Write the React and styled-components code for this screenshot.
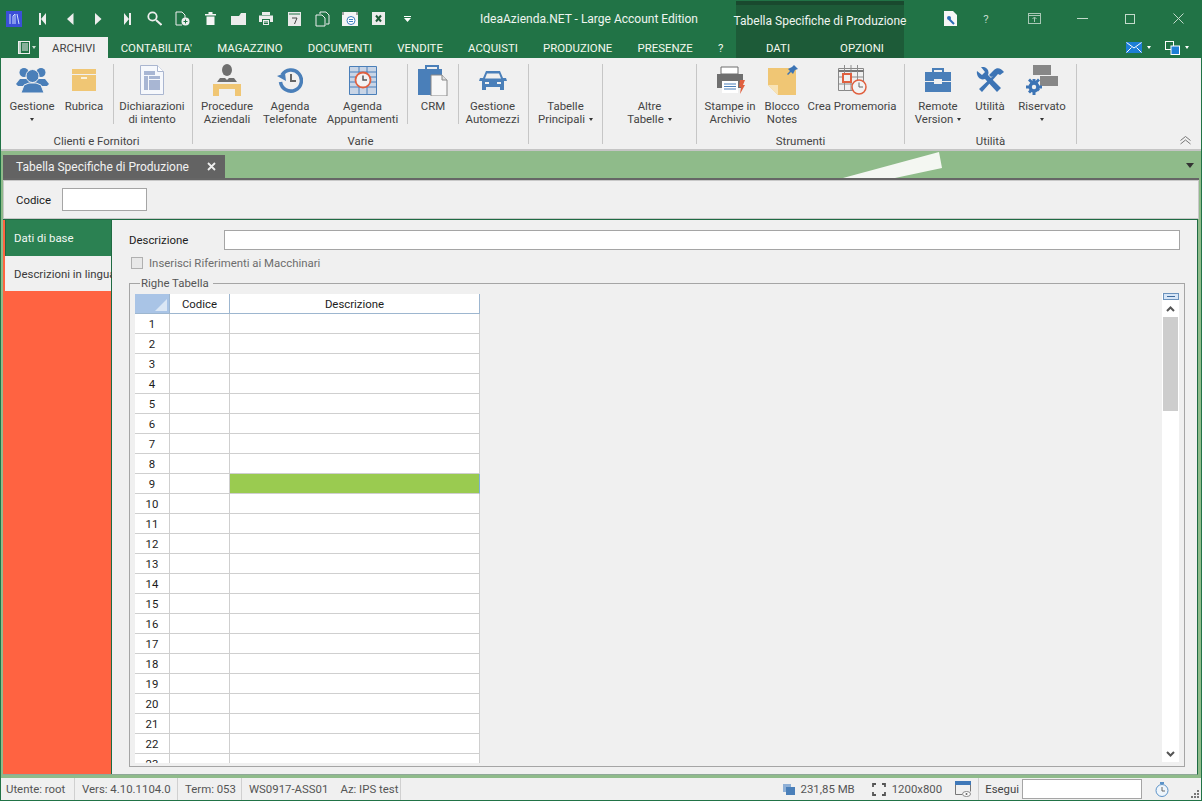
import React from 'react';
import styled, { createGlobalStyle } from 'styled-components';

const GlobalStyle = createGlobalStyle`
  html, body {
    margin: 0;
    padding: 0;
    background: #8fbb8a;
  }
  * { box-sizing: border-box; }
`;

const GREEN = '#217346';
const BLUE = '#4a7fb9';
const TAN = '#f0c674';
const GREY = '#6f6f6f';
const RED = '#e0603f';

const Window = styled.div`
  width: 1202px;
  height: 801px;
  overflow: hidden;
  display: flex;
  flex-direction: column;
  background: #8fbb8a;
  font-family: Roboto, "Liberation Sans", sans-serif;
  font-size: 11.4px;
  color: #444;
  border-left: 1px solid ${GREEN};
  border-right: 1px solid ${GREEN};
`;

/* title bar */
const TitleBar = styled.div`
  height: 58px;
  margin: 0 -1px;
  background: ${GREEN};
  display: flex;
  color: #fff;
  flex-shrink: 0;
`;

const TitleLeft = styled.div`
  width: 736px;
  display: flex;
  flex-direction: column;
`;

const QatRow = styled.div`
  height: 37px;
  display: flex;
  align-items: center;
  padding: 0 0 0 6px;
  position: relative;
`;

const QatButton = styled.span`
  width: ${(p) => p.$w || 28}px;
  height: 20px;
  display: flex;
  align-items: center;
  justify-content: ${(p) => (p.$start ? 'flex-start' : 'center')};
  flex-shrink: 0;
`;

const AppTitle = styled.div`
  margin-left: auto;
  padding-right: 38px;
  font-size: 12px;
  color: #eef5f0;
  white-space: nowrap;
`;

const TabRow = styled.div`
  height: 21px;
  display: flex;
  padding-left: 12px;
`;

const AppMenu = styled.div`
  width: 45px;
  display: flex;
  align-items: center;
  gap: 2px;
  padding-left: 6px;
`;

const Tab = styled.div`
  padding: 0 12.6px;
  display: flex;
  align-items: center;
  justify-content: center;
  font-size: 11.4px;
  white-space: nowrap;
  color: ${(p) => (p.$active ? '#444' : '#f4f8ee')};
  background: ${(p) => (p.$active ? '#f0f0f0' : 'transparent')};
`;

const ContextGroup = styled.div`
  width: 168px;
  background: #1d5b38;
  border-top: 4px solid #19492e;
  margin-top: 1px;
  display: flex;
  flex-direction: column;
`;

const ContextTitle = styled.div`
  height: 32px;
  display: flex;
  align-items: center;
  justify-content: center;
  font-size: 12px;
  color: #eef5f0;
  white-space: nowrap;
`;

const ContextTabs = styled.div`
  height: 21px;
  display: flex;
`;

const ContextTab = styled.div`
  flex: 1;
  display: flex;
  align-items: center;
  justify-content: center;
  font-size: 11.4px;
  color: #f4f8ee;
`;

const TitleRight = styled.div`
  flex: 1;
  display: flex;
  flex-direction: column;
`;

const WinControls = styled.div`
  height: 37px;
  display: flex;
  align-items: center;
  padding-left: 23px;
`;

const WinButton = styled.span`
  width: ${(p) => p.$w}px;
  display: flex;
  justify-content: center;
  align-items: center;
  color: #c3dacb;
`;

const Extras = styled.div`
  height: 21px;
  display: flex;
  justify-content: flex-end;
  align-items: center;
  gap: 14px;
  padding-right: 13px;
`;

const ExtraButton = styled.span`
  display: flex;
  align-items: center;
  gap: 5px;
`;

/* ribbon */
const Ribbon = styled.div`
  height: 93px;
  background: #f0f0f0;
  border-bottom: 2px solid #c5c5c5;
  display: flex;
  padding-top: 6px;
  position: relative;
  flex-shrink: 0;
`;

const RibbonGroup = styled.div`
  width: ${(p) => p.$w}px;
  height: 80px;
  border-right: 1px solid #c6c6c6;
  display: flex;
  flex-direction: column;
  flex-shrink: 0;
`;

const GroupItems = styled.div`
  height: 69px;
  flex-shrink: 0;
  display: flex;
`;

const GroupLabel = styled.div`
  height: 11px;
  line-height: 16px;
  text-align: center;
  white-space: nowrap;
`;

const RibbonItem = styled.div`
  width: ${(p) => p.$w}px;
  height: 60px;
  flex-shrink: 0;
  display: flex;
  flex-direction: column;
  align-items: center;
  padding-right: ${(p) => p.$pr || 0}px;
  border-right: ${(p) => (p.$sep ? '1px solid #c6c6c6' : 'none')};
`;

const ItemIcon = styled.div`
  height: 32px;
  flex-shrink: 0;
  display: flex;
  align-items: center;
  justify-content: center;
  margin-bottom: 4px;
`;

const ItemText = styled.div`
  text-align: center;
  line-height: 13px;
  white-space: nowrap;
  flex-shrink: 0;
`;

const Caret = styled.span`
  display: inline-block;
  width: 0;
  height: 0;
  margin-left: ${(p) => (p.$block ? 0 : 4)}px;
  vertical-align: middle;
  border-left: 2.5px solid transparent;
  border-right: 2.5px solid transparent;
  border-top: 3px solid ${(p) => p.$color || '#333'};
`;

const CaretLine = styled.div`
  height: 13px;
  flex-shrink: 0;
  display: flex;
  align-items: center;
  justify-content: center;
`;

const CollapseButton = styled.span`
  position: absolute;
  right: 10px;
  bottom: 4px;
  display: flex;
`;

/* document tabs band */
const DocBand = styled.div`
  height: 27px;
  position: relative;
  display: flex;
  align-items: flex-end;
  padding-left: 2px;
  flex-shrink: 0;
`;

const DocTab = styled.div`
  width: 222px;
  height: 23px;
  background: #636363;
  color: #f2f2f2;
  font-size: 12px;
  display: flex;
  align-items: center;
  justify-content: space-between;
  padding: 0 9px 0 13px;
`;

const Streak = styled.svg`
  position: absolute;
  left: 830px;
  top: 0;
`;

const BandArrow = styled.span`
  position: absolute;
  right: 7px;
  top: 12px;
  display: flex;
`;

/* form */
const FormFrame = styled.div`
  flex: 1;
  min-height: 0;
  margin: 0 2px 3px 2px;
  border-top: 2px solid #666;
  display: flex;
  flex-direction: column;
`;

const CodeStrip = styled.div`
  height: 39px;
  background: #f0f0f0;
  border: 1px solid #c8c8c8;
  display: flex;
  align-items: center;
  padding-left: 12px;
  flex-shrink: 0;
`;

const FieldLabel = styled.label`
  color: #1c1c1c;
  white-space: nowrap;
`;

const CodeLabel = styled(FieldLabel)`
  width: 46px;
`;

const TextBox = styled.div`
  width: ${(p) => (p.$w ? `${p.$w}px` : 'auto')};
  flex: ${(p) => (p.$w ? 'none' : 1)};
  height: 23px;
  background: #fff;
  border: 1px solid #a5a5a5;
`;

const Body = styled.div`
  flex: 1;
  min-height: 0;
  display: flex;
  margin-right: 1px;
  border-top: 1px solid #1f6b43;
  border-right: 1px solid #1f6b43;
  border-bottom: 1px solid #8fa898;
`;

const SideBar = styled.div`
  width: 109px;
  background: #ff6341;
  border-right: 1px solid #1f6b43;
  padding-left: 2px;
  flex-shrink: 0;
  display: flex;
  flex-direction: column;
`;

const SideTab = styled.div`
  height: ${(p) => (p.$active ? 36 : 35)}px;
  display: flex;
  align-items: center;
  white-space: nowrap;
  background: ${(p) => (p.$active ? '#2b8152' : '#f0f0f0')};
  color: ${(p) => (p.$active ? '#f2f7f3' : '#3a3a3a')};
  border-left: ${(p) => (p.$active ? '1px solid #1f6b43' : '0')};
  padding-left: ${(p) => (p.$active ? 8 : 9)}px;
`;

const Content = styled.div`
  flex: 1;
  min-width: 0;
  background: #f0f0f0;
  padding: 10px 12px 7px 17px;
  display: flex;
  flex-direction: column;
`;

const DescRow = styled.div`
  display: flex;
  align-items: center;
  height: 20px;
  margin-right: 5px;
`;

const DescLabel = styled(FieldLabel)`
  width: 95px;
`;

const DescBox = styled(TextBox)`
  height: 20px;
`;

const CheckRow = styled.div`
  height: 14px;
  margin-top: 6px;
  padding-left: 2px;
  display: flex;
  align-items: center;
  gap: 6px;
  color: #6d6d6d;
`;

const CheckBox = styled.span`
  width: 12px;
  height: 12px;
  border: 1px solid #b0b0b0;
  background: #e8e8e8;
`;

const GroupBox = styled.fieldset`
  flex: 1;
  min-height: 0;
  margin: 7px 0 0 0;
  padding: 0 5px 4px 5px;
  border: 1px solid #a5a5a5;
  position: relative;
  display: flex;
`;

const GroupLegend = styled.legend`
  margin-left: 5px;
  padding: 0 4px 0 1px;
  color: #555;
  line-height: 12px;
`;

const GridClip = styled.div`
  width: 345px;
  height: 469px;
  overflow: hidden;
  margin-top: 5px;
`;

const Grid = styled.table`
  width: 345px;
  border-collapse: separate;
  border-spacing: 0;
  table-layout: fixed;
  background: #fff;
`;

const HeadCell = styled.th`
  height: 20px;
  padding: 0;
  width: ${(p) => p.$w}px;
  font-weight: 400;
  color: #1c1c1c;
  background: #fff;
  border-right: 1px solid #9db6cf;
  border-bottom: 1px solid #9db6cf;
`;

const CornerCell = styled(HeadCell)`
  background: #a9c4e6;
  position: relative;
`;

const CornerMark = styled.svg`
  position: absolute;
  right: 2px;
  bottom: 2px;
`;

const RowNum = styled.td`
  height: 20px;
  padding: 0;
  text-align: center;
  color: #1c1c1c;
  background: #fff;
  border-right: 1px solid #cfcfcf;
  border-bottom: 1px solid #cfcfcf;
`;

const Cell = styled.td`
  height: 20px;
  padding: 0;
  background: ${(p) => (p.$selected ? '#9acb50' : '#fff')};
  border-right: 1px solid ${(p) => (p.$selected ? '#7fb0d8' : '#cfcfcf')};
  border-bottom: 1px solid #cfcfcf;
`;

const ScrollColumn = styled.div`
  position: absolute;
  right: 5px;
  top: 4px;
  bottom: 4px;
  width: 17px;
  background: #fff;
  display: flex;
  flex-direction: column;
  align-items: center;
`;

const ScrollTop = styled.div`
  width: 16px;
  height: 7px;
  background: #d7e6f7;
  border: 1px solid #6c93bd;
  display: flex;
  align-items: center;
  justify-content: center;
  flex-shrink: 0;
`;

const ScrollDash = styled.span`
  width: 8px;
  height: 1px;
  background: #3e6a9c;
`;

const ScrollArrow = styled.div`
  height: 17px;
  display: flex;
  align-items: center;
  justify-content: center;
  flex-shrink: 0;
`;

const ScrollThumb = styled.div`
  width: 15px;
  height: 94px;
  background: #cdcdcd;
  flex-shrink: 0;
`;

const ScrollGap = styled.div`
  flex: 1;
`;

/* status bar */
const StatusBar = styled.div`
  height: 23px;
  margin: 0 -1px;
  background: #f0f0f0;
  border-bottom: 1px solid ${GREEN};
  border-left: 1px solid ${GREEN};
  border-right: 1px solid ${GREEN};
  display: flex;
  align-items: center;
  flex-shrink: 0;
  position: relative;
`;

const StatusCell = styled.div`
  height: 100%;
  width: ${(p) => p.$w}px;
  display: flex;
  align-items: center;
  padding-left: ${(p) => p.$pl || 7}px;
  gap: 12px;
  border-right: 1px solid #d0d0d0;
  white-space: nowrap;
  color: #555;
`;

const StatusRight = styled.div`
  margin-left: auto;
  height: 100%;
  display: flex;
  align-items: center;
  padding-right: 32px;
`;

const StatusItem = styled.div`
  display: flex;
  align-items: center;
  gap: 6px;
  margin-right: ${(p) => p.$mr || 0}px;
  white-space: nowrap;
  color: #555;
`;

const RunLabel = styled.span`
  margin: 0 3px 0 7px;
  color: #444;
  border-left: 1px solid #d0d0d0;
  padding-left: 6px;
  height: 100%;
  display: flex;
  align-items: center;
`;

const RunBox = styled.div`
  width: 120px;
  height: 20px;
  background: #fff;
  border: 1px solid #a5a5a5;
  margin-right: 13px;
`;

const Grip = styled.svg`
  position: absolute;
  right: 2px;
  bottom: 2px;
`;

/* drawings */
const Svg = ({ w, h = w, children, ...rest }) => (
  <svg width={w} height={h} viewBox={`0 0 ${w} ${h}`} {...rest}>{children}</svg>
);

const QLogo = () => (
  <Svg w={16} h={16}>
    <rect width="16" height="16" fill="#3b4fd8" />
    <path d="M4 3v10M7 13V5l2-2v10M11 3l2 10" stroke="#cfe0ff" fill="none" />
  </Svg>
);
const First = () => <Svg w={7} h={12}><path d="M0 0h2v12H0zM7 0v12L2 6z" fill="#eee" /></Svg>;
const Prev = () => <Svg w={7} h={12}><path d="M6.500 0v12L0 6z" fill="#eee" /></Svg>;
const Next = () => <Svg w={7} h={12}><path d="M0 0v12l6.500-6z" fill="#eee" /></Svg>;
const Last = () => <Svg w={7} h={12}><path d="M5 0h2v12H5zM0 0v12l5-6z" fill="#eee" /></Svg>;
const Search = () => (
  <Svg w={15} h={15}>
    <circle cx="5.500" cy="5.500" r="4.200" fill="none" stroke="#eee" strokeWidth="1.800" />
    <path d="M9 9l5.500 5" stroke="#eee" strokeWidth="2" />
  </Svg>
);
const NewDoc = () => (
  <Svg w={15} h={15}>
    <path d="M1 1h6l3 3v4M7 14H1V1" fill="none" stroke="#eee" />
    <circle cx="10.500" cy="10.500" r="4" fill="#eee" />
    <path d="M8.500 10.500h4M10.500 8.500v4" stroke={GREEN} />
  </Svg>
);
const Trash = () => (
  <Svg w={11} h={13}>
    <path d="M0 2h11v1.500H0zM3.500 0h4v2h-4zM1.500 4.500h8V13h-8z" fill="#f5f5f5" />
  </Svg>
);
const Folder = () => (
  <Svg w={15} h={12}><path d="M0 3h8l2-3h5v12H0z" fill="#ececec" /></Svg>
);
const Printer = () => (
  <Svg w={14} h={13}>
    <path d="M3 0h8v3H3zM0 3.500h14V10h-3V7H3v3H0zM4 8h6v5H4z" fill="#ececec" />
    <path d="M5 10h4M5 11.500h4" stroke={GREEN} />
  </Svg>
);
const Calc = () => (
  <Svg w={13} h={14}>
    <path d="M0 0h13v14H0z" fill="#e9e9e9" />
    <path d="M1 2h11" stroke={GREEN} />
    <path d="M4 6h5l-2.500 6" fill="none" stroke="#444" />
  </Svg>
);
const Copy = () => (
  <Svg w={15} h={16}>
    <path d="M5 3V1h6l3 3v9h-3M1 4h6l3 3v8H1z" fill="none" stroke="#eee" />
  </Svg>
);
const Preview = () => (
  <Svg w={16} h={14}>
    <rect width="16" height="14" fill="#f4f4f4" />
    <path d="M1 0v3M15 0v3" stroke="#555" />
    <circle cx="9" cy="8.500" r="4" fill="#fff" stroke="#3c7fc0" />
    <path d="M7 7.500h4M7 9.500h4" stroke="#3c7fc0" />
  </Svg>
);
const ExcelX = () => (
  <Svg w={13} h={13}>
    <rect width="13" height="13" fill="#ececec" />
    <path d="M4 3.500l5 6M9 3.500l-5 6" stroke="#1d5b38" strokeWidth="2" />
  </Svg>
);
const QatMore = () => (
  <Svg w={7} h={6}><path d="M0 0h7v1H0zM0 2h7L3.500 6z" fill="#fff" /></Svg>
);
const MenuIcon = () => (
  <Svg w={12} h={13}>
    <rect x=".5" y=".5" width="11" height="12" fill="none" stroke="#eee" />
    <path d="M2 .5v12" stroke="#eee" strokeWidth="1.500" />
    <path d="M4 3h6M4 5h6M4 7h6M4 9h6" stroke="#eee" />
  </Svg>
);
const HelpDoc = () => (
  <Svg w={13} h={15}>
    <path d="M0 0h9l4 4v11H0z" fill="#f6f6f6" />
    <path d="M5 8l5 5" stroke="#2a6cb5" strokeWidth="2" />
    <circle cx="5" cy="7" r="2" fill="#2a6cb5" />
  </Svg>
);
const Restore = () => (
  <Svg w={13} h={11}>
    <rect x=".5" y=".5" width="12" height="10" fill="none" stroke="#a9c8b6" />
    <path d="M1 2.500h11M6.500 9V4.500M4.500 6l2-2 2 2" fill="none" stroke="#a9c8b6" />
  </Svg>
);
const MinIcon = () => <Svg w={11} h={3}><path d="M0 1.500h11" stroke="#c3dacb" /></Svg>;
const MaxIcon = () => <Svg w={10} h={10}><rect x=".5" y=".5" width="9" height="9" fill="none" stroke="#c3dacb" /></Svg>;
const CloseIcon = () => <Svg w={11} h={11}><path d="M.5.500l10 10M10.500.500l-10 10" stroke="#c3dacb" /></Svg>;
const Envelope = () => (
  <Svg w={16} h={11}>
    <rect width="16" height="11" fill="#1e7fd6" />
    <path d="M.5.500L8 6l7.500-5.500M.5 10.500l5-5M15.500 10.500l-5-5" fill="none" stroke="#fff" />
  </Svg>
);
const Windows = () => (
  <Svg w={15} h={14}>
    <rect x=".5" y=".5" width="8" height="8" fill={GREEN} stroke="#fff" />
    <rect x="6" y="5" width="8.500" height="8.500" fill="#1e7fd6" stroke="#fff" />
  </Svg>
);

const People = () => (
  <Svg w={33} h={28}>
    <g fill={BLUE}>
      <circle cx="8" cy="6.500" r="4.500" />
      <circle cx="25" cy="6.500" r="4.500" />
      <path d="M0 18l4-5h8l4 5-6 2H2zM33 18l-4-5h-8l-4 5 6 2h8z" />
    </g>
    <circle cx="16.500" cy="10" r="6.500" fill={BLUE} stroke="#f0f0f0" />
    <path d="M5 27l3-8 5-2h7l5 2 3 8z" fill={BLUE} stroke="#f0f0f0" />
  </Svg>
);
const Box = () => (
  <Svg w={24} h={22}>
    <path d="M0 0h24v5H0zM0 6h24v16H0z" fill={TAN} />
    <path d="M9 8h6v2H9z" fill="#fbf1d9" />
  </Svg>
);
const Sheet = () => (
  <Svg w={24} h={30}>
    <path d="M.5.500h17l6 6v23H.5z" fill="#f6f8fc" stroke="#aab6d0" />
    <path d="M17.500.500v6h6" fill="#fff" stroke="#aab6d0" />
    <path d="M4 6h11v4H4zM4 11h4v14H4zM9 11h11v3H9zM9 15h11v10H9z" fill="#a8b6d3" />
  </Svg>
);
const Desk = () => (
  <Svg w={28} h={32}>
    <ellipse cx="14" cy="6" rx="5" ry="6" fill={GREY} />
    <path d="M4 18l3-4h5l2 2 2-2h5l3 4z" fill={GREY} />
    <path d="M0 20h28v12H22v-7H6v7H0z" fill={TAN} />
  </Svg>
);
const History = () => (
  <Svg w={26} h={26}>
    <path d="M5 8a10.500 10.500 0 1 1-1.500 7" fill="none" stroke={BLUE} strokeWidth="3.500" />
    <path d="M0 9l8-3 1 8z" fill={BLUE} />
    <path d="M14 7v7h5" fill="none" stroke="#666" strokeWidth="2" />
  </Svg>
);
const Planner = () => (
  <Svg w={28} h={29}>
    <path d="M.5.500h27v28H.5z" fill="#c9d5e6" stroke={BLUE} />
    <path d="M10 1v28M18 1v28M1 6h27M1 11h27M1 16h27M1 21h27" stroke={BLUE} />
    <circle cx="14" cy="14" r="7.500" fill="#f3f3f3" stroke={RED} strokeWidth="1.800" />
    <path d="M14 9.500V14h4" fill="none" stroke="#555" strokeWidth="1.500" />
  </Svg>
);
const CrmIcon = () => (
  <Svg w={30} h={31}>
    <path d="M8 4V1h12v3" fill="none" stroke={BLUE} strokeWidth="2" />
    <path d="M0 4h24v26H0z" fill={BLUE} />
    <path d="M13 10h11l5 5v16H13z" fill="#f7f7f7" stroke="#888" />
    <path d="M24 10v5h5" fill="#ddd" stroke="#888" />
  </Svg>
);
const Car = () => (
  <Svg w={28} h={21}>
    <path d="M7 1h14l3 7h3l1 3h-3v9h-4v-3H7v3H3v-9H0l1-3h3z" fill={BLUE} />
    <path d="M8 3.500h12l2 5H6z" fill="#f0f0f0" />
    <path d="M6 12h4v2H6zM18 12h4v2h-4z" fill="#f0f0f0" />
  </Svg>
);
const PrintArchive = () => (
  <Svg w={29} h={28}>
    <path d="M5 1h17v7H5z" fill="#fff" stroke="#6f6f6f" />
    <path d="M1 8h26v14H1z" fill={GREY} />
    <path d="M6 15h16v12H6z" fill="#fff" />
    <path d="M8 18h12M8 20.500h12M8 23h12" stroke={BLUE} />
    <path d="M24 14h5l-2 5h2l-5 9 1-7h-2z" fill={RED} />
  </Svg>
);
const Sticky = () => (
  <Svg w={31} h={31}>
    <path d="M1 3h28v27H11L1 20z" fill={TAN} />
    <path d="M1 20h10v10z" fill="#f8e3b6" />
    <path d="M27 0l4 4-3 1-2 4-2-2-3 3-1-1 3-3-2-2 4-2z" fill="#3c74b5" />
  </Svg>
);
const Reminder = () => (
  <Svg w={29} h={30}>
    <path d="M.5 3.500h25v22H.5z" fill="none" stroke="#888" />
    <path d="M.5 6h25" stroke="#777" strokeWidth="2" />
    <path d="M6.500 0v5M13 0v5M19.500 0v5M6.500 6v20M13 6v20M19.500 6v20M1 12h24M1 19h24" stroke="#8e8e8e" />
    <rect x="5" y="9" width="8" height="8" fill="#f0f0f0" stroke={RED} strokeWidth="2" />
    <circle cx="21" cy="22" r="7" fill="#f3f3f3" stroke={RED} strokeWidth="1.500" />
    <path d="M21 17.500V22h4" fill="none" stroke="#666" />
  </Svg>
);
const Briefcase = () => (
  <Svg w={26} h={24}>
    <path d="M8 4V1h10v3" fill="none" stroke={BLUE} strokeWidth="2" />
    <path d="M0 4h26v9h-9v-2H9v2H0zM0 14h9v2h8v-2h9v10H0z" fill={BLUE} />
  </Svg>
);
const Tools = () => (
  <Svg w={29} h={26}>
    <path d="M1 4l5 4 3-3-4-5c5-1 9 3 7 8l13 13-4 4L9 12C4 14 0 9 1 4z" fill="#3c74b5" />
    <path d="M13 8l5-5c3-3 7-2 10 2l-4 3-2-1L6 25l-3-3L17 9l-2 1z" fill="#3c74b5" />
  </Svg>
);
const Reserved = () => (
  <Svg w={32} h={30}>
    <path d="M7 0h18v10H7zM14 11h18v10H14z" fill="#878787" />
    <g fill="#3c74b5">
      <circle cx="8" cy="22" r="5.500" />
      <path d="M6.500 14h3v3h-3zM6.500 27h3v3h-3zM0 20.500h3v3H0zM13 20.500h3v3h-3zM2 15.500l2-2 3 3-2 2zM12 26.500l2-2-3-3-2 2zM2 26.500l2 2 3-3-2-2zM12 13.500l2 2-3 3-2-2z" />
    </g>
    <circle cx="8" cy="22" r="2.200" fill="#f0f0f0" />
  </Svg>
);
const Collapse = () => (
  <Svg w={11} h={9}>
    <path d="M.5 4.500L5.500.500l5 4M.5 8L5.500 4l5 4" fill="none" stroke="#777" />
  </Svg>
);
const Xmark = () => (
  <Svg w={9} h={9}><path d="M1 1l7 7M8 1L1 8" stroke="#eee" strokeWidth="1.800" /></Svg>
);
const BandCaret = () => (
  <Svg w={8} h={5}><path d="M0 0h8L4 5z" fill="#333" /></Svg>
);
const Chevron = ({ up }) => (
  <Svg w={9} h={6}>
    <path d={up ? 'M1 5l3.500-3.500L8 5' : 'M1 1l3.500 3.500L8 1'} fill="none" stroke="#555" strokeWidth="2" />
  </Svg>
);
const Memory = () => (
  <Svg w={12} h={11}>
    <rect width="8" height="8" fill="#8fb0d6" />
    <rect x="3" y="3" width="9" height="8" fill="#4a7fb9" />
  </Svg>
);
const FullScreen = () => (
  <Svg w={14} h={13}>
    <path d="M1 4V1h3M10 1h3v3M13 9v3h-3M4 12H1V9" fill="none" stroke="#555" strokeWidth="1.800" />
  </Svg>
);
const WinView = () => (
  <Svg w={16} h={16}>
    <path d="M.5 1.500h15v9M7 13.500H.5v-12" fill="none" stroke="#777" />
    <rect width="16" height="4" fill="#3f78b8" />
    <ellipse cx="11.500" cy="13" rx="4" ry="2.500" fill="#fff" stroke="#888" />
    <circle cx="11.500" cy="13" r="1" fill="#666" />
  </Svg>
);
const Timer = () => (
  <Svg w={14} h={17}>
    <circle cx="7" cy="9.500" r="6" fill="#eef5fb" stroke="#5b92c8" />
    <path d="M7 6v4h3" fill="none" stroke="#666" />
    <path d="M5 1h4v2H5z" fill="#5b92c8" />
  </Svg>
);

const qat = [
  [QLogo, 22], [First, 28], [Prev, 28], [Next, 29], [Last, 28], [Search, 27], [NewDoc, 29],
  [Trash, 27], [Folder, 28], [Printer, 28], [Calc, 29], [Copy, 27], [Preview, 28], [ExcelX, 28], [QatMore, 30],
];

const tabs = ['CONTABILITA\'', 'MAGAZZINO', 'DOCUMENTI', 'VENDITE', 'ACQUISTI', 'PRODUZIONE', 'PRESENZE', '?'];

const groups = [
  {
    w: 192,
    label: 'Clienti e Fornitori',
    items: [
      { w: 62, icon: People, lines: ['Gestione'], caret: 'block' },
      { w: 51, icon: Box, lines: ['Rubrica'], sep: true, pr: 8 },
      { w: 78, icon: Sheet, lines: ['Dichiarazioni', 'di intento'], pr: 2 },
    ],
  },
  {
    w: 336,
    label: 'Varie',
    items: [
      { w: 68, icon: Desk, lines: ['Procedure', 'Aziendali'] },
      { w: 58, icon: History, lines: ['Agenda', 'Telefonate'] },
      { w: 89, icon: Planner, lines: ['Agenda', 'Appuntamenti'], sep: true, pr: 1 },
      { w: 51, icon: CrmIcon, lines: ['CRM'], sep: true },
      { w: 69, icon: Car, lines: ['Gestione', 'Automezzi'], pr: 2 },
    ],
  },
  { w: 74, items: [{ w: 73, lines: ['Tabelle', 'Principali'], caret: 'inline' }] },
  { w: 94, items: [{ w: 93, lines: ['Altre', 'Tabelle'], caret: 'inline' }] },
  {
    w: 208,
    label: 'Strumenti',
    items: [
      { w: 66, icon: PrintArchive, lines: ['Stampe in', 'Archivio'] },
      { w: 38, icon: Sticky, lines: ['Blocco', 'Notes'] },
      { w: 102, icon: Reminder, lines: ['Crea Promemoria'] },
    ],
  },
  {
    w: 172,
    label: 'Utilità',
    items: [
      { w: 66, icon: Briefcase, lines: ['Remote', 'Version'], caret: 'inline' },
      { w: 38, icon: Tools, lines: ['Utilità'], caret: 'block' },
      { w: 66, icon: Reserved, lines: ['Riservato'], caret: 'block' },
    ],
  },
];

const rows = Array.from({ length: 23 }, (_, i) => i + 1);

const RibbonButton = ({ item }) => {
  const Icon = item.icon;
  return (
    <RibbonItem $w={item.w} $sep={item.sep} $pr={item.pr}>
      <ItemIcon>{Icon ? <Icon /> : null}</ItemIcon>
      {item.lines.map((line, i) => (
        <ItemText key={line}>
          {line}
          {item.caret === 'inline' && i === item.lines.length - 1 ? <Caret /> : null}
        </ItemText>
      ))}
      {item.caret === 'block' ? <CaretLine><Caret $block /></CaretLine> : null}
    </RibbonItem>
  );
};

const App = () => (
  <>
    <GlobalStyle />
    <Window>
      <TitleBar>
        <TitleLeft>
          <QatRow>
            {qat.map(([Icon, w], i) => (
              <QatButton key={i} $w={w} $start={i === 0}><Icon /></QatButton>
            ))}
            <AppTitle>IdeaAzienda.NET - Large Account Edition</AppTitle>
          </QatRow>
          <TabRow>
            <AppMenu><MenuIcon /><Caret $block $color="#cde0d4" /></AppMenu>
            <Tab $active>ARCHIVI</Tab>
            {tabs.map((t) => <Tab key={t}>{t}</Tab>)}
          </TabRow>
        </TitleLeft>
        <ContextGroup>
          <ContextTitle>Tabella Specifiche di Produzione</ContextTitle>
          <ContextTabs>
            <ContextTab>DATI</ContextTab>
            <ContextTab>OPZIONI</ContextTab>
          </ContextTabs>
        </ContextGroup>
        <TitleRight>
          <WinControls>
            <WinButton $w={47}><HelpDoc /></WinButton>
            <WinButton $w={24}>?</WinButton>
            <WinButton $w={72}><Restore /></WinButton>
            <WinButton $w={24}><MinIcon /></WinButton>
            <WinButton $w={72}><MaxIcon /></WinButton>
            <WinButton $w={24}><CloseIcon /></WinButton>
          </WinControls>
          <Extras>
            <ExtraButton><Envelope /><Caret $block $color="#fff" /></ExtraButton>
            <ExtraButton><Windows /><Caret $block $color="#fff" /></ExtraButton>
          </Extras>
        </TitleRight>
      </TitleBar>

      <Ribbon>
        {groups.map((g, i) => (
          <RibbonGroup key={i} $w={g.w}>
            <GroupItems>
              {g.items.map((item) => <RibbonButton key={item.lines.join()} item={item} />)}
            </GroupItems>
            {g.label ? <GroupLabel>{g.label}</GroupLabel> : null}
          </RibbonGroup>
        ))}
        <CollapseButton><Collapse /></CollapseButton>
      </Ribbon>

      <DocBand>
        <DocTab>Tabella Specifiche di Produzione<Xmark /></DocTab>
        <Streak width="120" height="27" viewBox="0 0 120 27">
          <path d="M12 27L108 1l3 16-47 10z" fill="#f4f7f2" />
        </Streak>
        <BandArrow><BandCaret /></BandArrow>
      </DocBand>

      <FormFrame>
        <CodeStrip>
          <CodeLabel>Codice</CodeLabel>
          <TextBox $w={85} />
        </CodeStrip>
        <Body>
          <SideBar>
            <SideTab $active>Dati di base</SideTab>
            <SideTab>Descrizioni in lingua</SideTab>
          </SideBar>
          <Content>
            <DescRow>
              <DescLabel>Descrizione</DescLabel>
              <DescBox />
            </DescRow>
            <CheckRow><CheckBox />Inserisci Riferimenti ai Macchinari</CheckRow>
            <GroupBox>
              <GroupLegend>Righe Tabella</GroupLegend>
              <GridClip>
                <Grid>
                  <thead>
                    <tr>
                      <CornerCell $w={35}>
                        <CornerMark width="12" height="12" viewBox="0 0 12 12">
                          <path d="M12 0v12H0z" fill="#dbe7f5" />
                        </CornerMark>
                      </CornerCell>
                      <HeadCell $w={60}>Codice</HeadCell>
                      <HeadCell $w={250}>Descrizione</HeadCell>
                    </tr>
                  </thead>
                  <tbody>
                    {rows.map((n) => (
                      <tr key={n}>
                        <RowNum>{n}</RowNum>
                        <Cell />
                        <Cell $selected={n === 9} />
                      </tr>
                    ))}
                  </tbody>
                </Grid>
              </GridClip>
              <ScrollColumn>
                <ScrollTop><ScrollDash /></ScrollTop>
                <ScrollArrow><Chevron up /></ScrollArrow>
                <ScrollThumb />
                <ScrollGap />
                <ScrollArrow><Chevron /></ScrollArrow>
              </ScrollColumn>
            </GroupBox>
          </Content>
        </Body>
      </FormFrame>

      <StatusBar>
        <StatusCell $w={74} $pl={5}>Utente: root</StatusCell>
        <StatusCell $w={103}>Vers: 4.10.1104.0</StatusCell>
        <StatusCell $w={64}>Term: 053</StatusCell>
        <StatusCell $w={159}>
          <span>WS0917-ASS01</span>
          <span>Az: IPS test</span>
        </StatusCell>
        <StatusRight>
          <StatusItem $mr={17}><Memory />231,85 MB</StatusItem>
          <StatusItem $mr={13}><FullScreen />1200x800</StatusItem>
          <StatusItem><WinView /></StatusItem>
          <RunLabel>Esegui</RunLabel>
          <RunBox />
          <Timer />
        </StatusRight>
        <Grip width="9" height="9" viewBox="0 0 9 9">
          <path d="M7 1h2v2H7zM4 4h2v2H4zM7 4h2v2H7zM1 7h2v2H1zM4 7h2v2H4zM7 7h2v2H7z" fill="#777" />
        </Grip>
      </StatusBar>
    </Window>
  </>
);

export default App;
